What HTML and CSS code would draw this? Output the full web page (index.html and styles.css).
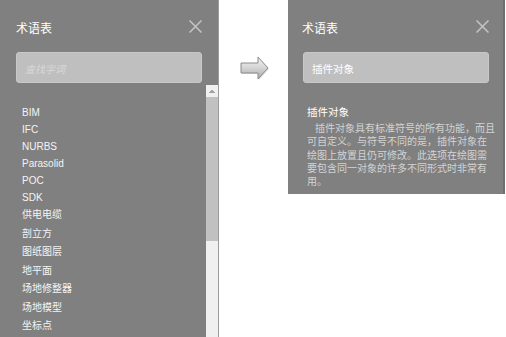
FILE: index.html
```html
<!DOCTYPE html>
<html lang="zh-CN">
<head>
    <meta charset="UTF-8">
    <meta name="viewport" content="width=device-width, initial-scale=1.0">
    <title>术语表</title>
    <link rel="stylesheet" href="styles.css">
</head>
<body>
    <!-- 术语表：搜索前 -->
    <div class="panel panel-list">
        <div class="panel-head">
            <span class="panel-title">术语表</span>
            <svg class="close" width="13" height="13" viewBox="0 0 13 13"><path d="M0.5 0.5 L12.5 12.5 M12.5 0.5 L0.5 12.5"/></svg>
        </div>
        <input class="search" type="text" placeholder="查找字词">
        <div class="terms">
            <ul>
                <li>BIM</li>
                <li>IFC</li>
                <li>NURBS</li>
                <li>Parasolid</li>
                <li>POC</li>
                <li>SDK</li>
                <li class="cn">供电电缆</li>
                <li class="cn">剖立方</li>
                <li class="cn">图纸图层</li>
                <li class="cn">地平面</li>
                <li class="cn">场地修整器</li>
                <li class="cn">场地模型</li>
                <li class="cn">坐标点</li>
            </ul>
            <!-- 滚动条 -->
            <div class="scrollbar">
                <div class="scroll-up"></div>
                <div class="scroll-thumb"></div>
            </div>
        </div>
    </div>

    <!-- 箭头 -->
    <svg class="arrow" width="32" height="26" viewBox="0 0 32 26">
        <defs>
            <linearGradient id="arrowFill" x1="0" y1="0" x2="0" y2="1">
                <stop offset="0" stop-color="#f6f6f6"/>
                <stop offset="0.5" stop-color="#d4d4d4"/>
                <stop offset="1" stop-color="#a9a9a9"/>
            </linearGradient>
        </defs>
        <polygon points="2,8 19,8 19,2 29,13 19,24 19,18 2,18" fill="#000" opacity="0.12"/>
        <polygon points="1,7 18,7 18,1 28,12 18,23 18,17 1,17" fill="url(#arrowFill)" stroke="#8a8a8a" stroke-width="1"/>
    </svg>

    <!-- 术语表：搜索后 -->
    <div class="panel panel-detail">
        <div class="panel-head">
            <span class="panel-title">术语表</span>
            <svg class="close" width="13" height="13" viewBox="0 0 13 13"><path d="M0.5 0.5 L12.5 12.5 M12.5 0.5 L0.5 12.5"/></svg>
        </div>
        <input class="search" type="text" value="插件对象">
        <div class="term-detail">
            <h2>插件对象</h2>
            <p>插件对象具有标准符号的所有功能，而且可自定义。与符号不同的是，插件对象在绘图上放置且仍可修改。此选项在绘图需要包含同一对象的许多不同形式时非常有用。</p>
        </div>
    </div>
</body>
</html>
```

FILE: styles.css
```css
body {
    margin: 0;
    height: 337px;
    overflow: hidden;
    background: #fff;
    display: flex;
    align-items: flex-start;
    font-family: "Liberation Sans", "Noto Sans CJK SC", sans-serif;
}

.panel {
    background-color: #808080;
    color: #fff;
    box-sizing: border-box;
    display: flex;
    flex-direction: column;
}

.panel-list {
    width: 219px;
    height: 337px;
    padding-left: 16px;
    border-right: 1px solid #9c9c9c;
}

.panel-detail {
    width: 217px;
    height: 194px;
    margin-left: 16px;
    padding-left: 14px;
    border-right: 2px solid #6f6f6f;
}

.panel-head {
    height: 52px;
    display: flex;
    justify-content: space-between;
    align-items: flex-start;
    padding-right: 16px;
}

.panel-detail .panel-head {
    padding-right: 14px;
}

.panel-title {
    font-family: "Noto Sans CJK SC", sans-serif;
    font-size: 12px;
    line-height: 17px;
    margin-top: 19px;
}

.close {
    margin-top: 20px;
}

.close path {
    stroke: #c4c4c4;
    stroke-width: 1.5;
    fill: none;
}

.search {
    box-sizing: border-box;
    width: 186px;
    height: 31px;
    margin: 0;
    padding: 2px 0 0 8px;
    border: 1px solid #c8c8c8;
    border-radius: 3px;
    background-color: #bfbfbf;
    color: #fff;
    font-family: "Noto Sans CJK SC", sans-serif;
    font-size: 10.5px;
    outline: none;
}

.search::placeholder {
    color: #d9d9d9;
    font-style: italic;
    font-size: 10px;
}

.panel-detail .search {
    margin-left: 1px;
}

/* 列表区域和滚动条 */
.terms {
    flex: 1;
    min-height: 0;
    display: flex;
    margin: 2px 0 0 -16px;
}

.terms ul {
    flex: 1;
    overflow: hidden;
    list-style: none;
    margin: 0;
    padding: 19px 0 0 22px;
    font-size: 10px;
}

.terms li {
    line-height: 17px;
    color: #f4f4f4;
}

.terms li.cn {
    line-height: 18.5px;
}

.scrollbar {
    width: 12px;
    background-color: #f0f0f0;
    display: flex;
    flex-direction: column;
}

.scroll-up {
    height: 12px;
    background-image: linear-gradient(to top left, #a3a3a3 50%, transparent 50%),
                      linear-gradient(to top right, #a3a3a3 50%, transparent 50%);
    background-repeat: no-repeat;
    background-size: 4px 4px;
    background-position: 2px 4px, 6px 4px;
}

.scroll-thumb {
    height: 144px;
    background-color: #c1c1c1;
}

.arrow {
    margin: 56px 0 0 21px;
}

.term-detail {
    padding-left: 5px;
    width: 189px;
}

.term-detail h2 {
    margin: 21px 0 0;
    font-family: "Noto Sans CJK SC", sans-serif;
    font-size: 10.5px;
    font-weight: normal;
    line-height: 15px;
}

.term-detail p {
    margin: 2px 0 0;
    font-family: "Noto Sans CJK SC", sans-serif;
    font-size: 10px;
    line-height: 13.3px;
    text-indent: 8px;
    color: #d4d4d4;
}
```
